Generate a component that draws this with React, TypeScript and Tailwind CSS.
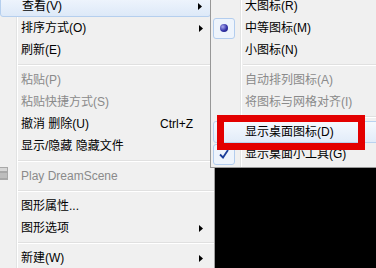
import React from "react";

type Item =
  | { sep: true }
  | { label: string; disabled?: boolean; arrow?: boolean; shortcut?: string; hover?: boolean; icon?: boolean };

const mainItems: Item[] = [
  { label: "查看(V)", arrow: true, hover: true },
  { label: "排序方式(O)", arrow: true },
  { label: "刷新(E)" },
  { sep: true },
  { label: "粘贴(P)", disabled: true },
  { label: "粘贴快捷方式(S)", disabled: true },
  { label: "撤消 删除(U)", shortcut: "Ctrl+Z" },
  { label: "显示/隐藏 隐藏文件" },
  { sep: true },
  { label: "Play DreamScene", disabled: true, icon: true },
  { sep: true },
  { label: "图形属性..." },
  { label: "图形选项", arrow: true },
  { sep: true },
  { label: "新建(W)", arrow: true },
];

type SubItem = { sep: true } | { label: string; disabled?: boolean; mark?: "radio" | "check"; hover?: boolean };

const subItems: SubItem[] = [
  { label: "大图标(R)" },
  { label: "中等图标(M)", mark: "radio" },
  { label: "小图标(N)" },
  { sep: true },
  { label: "自动排列图标(A)", disabled: true },
  { label: "将图标与网格对齐(I)", disabled: true },
  { sep: true },
  { label: "显示桌面图标(D)", hover: true },
  { label: "显示桌面小工具(G)", mark: "check" },
];

const font = { fontFamily: '"Liberation Sans", "Noto Sans CJK SC", sans-serif' };

function Arrow() {
  return (
    <svg width="4" height="7" viewBox="0 0 4 7" className="block">
      <path d="M0 0 L4 3.5 L0 7 Z" fill="#000" />
    </svg>
  );
}

function Separator({ left }: { left: number }) {
  return (
    <div className="h-[8px] flex flex-col justify-center" style={{ marginLeft: left }}>
      <div className="h-px bg-[#e0e0e0]" />
      <div className="h-px bg-white" />
    </div>
  );
}

function MainMenu() {
  return (
    <div className="relative w-[215px] h-[268px] shrink-0 overflow-hidden bg-[#f0f0f0] border-r border-[#a0a0a0]">
      {/* icon gutter line */}
      <div className="absolute left-[16px] top-0 bottom-0 w-[2px] border-l border-[#e2e3e3] bg-white" />
      <div className="relative -mt-[5px]">
        {mainItems.map((it, i) =>
          "sep" in it ? (
            <Separator key={i} left={18} />
          ) : (
            <div
              key={i}
              className={`relative h-[22px] mr-[3px] flex items-center pl-[21px] pr-[8px] ${
                it.hover ? "bg-gradient-to-b from-[#f1f6fd] to-[#dde9f8] border border-[#b5cfee] rounded-[3px] pl-[20px]" : ""
              } ${it.disabled ? "text-[#8a8a8a]" : "text-black"}`}
            >
              {it.icon && (
                <svg width="8" height="13" viewBox="0 0 8 13" className="absolute left-0 top-[2px]">
                  <rect x="0" y="0" width="8" height="13" fill="#a8a8a8" />
                  <rect x="0" y="1" width="7" height="3" fill="#d6d6d6" />
                  <rect x="0" y="6" width="7" height="5" fill="#bdbdbd" />
                </svg>
              )}
              <span className="flex-1 text-[12px] leading-none whitespace-nowrap">{it.label}</span>
              {it.shortcut && <span className="text-[12px] leading-none">{it.shortcut}</span>}
              <span className="w-[10px] flex justify-end">{it.arrow && <Arrow />}</span>
            </div>
          )
        )}
      </div>
    </div>
  );
}

function Mark({ kind }: { kind: "radio" | "check" }) {
  return (
    <div className="w-[22px] h-[21px] rounded-[3px] border border-[#b3cdee] bg-[#eef4fc] flex items-center justify-center">
      {kind === "radio" ? (
        <div className="w-[8px] h-[8px] rounded-full bg-[radial-gradient(circle_at_35%_35%,#a9a9f0,#3434a8_55%,#15156e)]" />
      ) : (
        <svg width="10" height="10" viewBox="0 0 10 10">
          <path d="M1 5.5 L4 8.5 L9 1" fill="none" stroke="#1b3d9a" strokeWidth="1.8" />
        </svg>
      )}
    </div>
  );
}

function SubMenu() {
  return (
    <div className="absolute left-[210px] top-[-6px] w-[172px] h-[174px] bg-[#f0f0f0] border border-[#979797] overflow-hidden">
      <div className="absolute left-[29px] top-0 bottom-0 w-[2px] border-l border-[#e2e3e3] bg-white" />
      <div className="relative">
        {subItems.map((it, i) =>
          "sep" in it ? (
            <Separator key={i} left={32} />
          ) : (
            <div
              key={i}
              className={`h-[22px] flex items-center ml-[2px] ${
                it.hover ? "bg-gradient-to-b from-[#f5f9fe] to-[#e2ecf9] border border-[#bad2ef] rounded-[3px]" : ""
              } ${it.disabled ? "text-[#8a8a8a]" : "text-black"}`}
            >
              <div className="w-[22px] h-[22px] flex items-center">{it.mark && <Mark kind={it.mark} />}</div>
              <span className={`${it.hover ? "ml-[9px]" : "ml-[10px]"} text-[12px] leading-none whitespace-nowrap`}>
                {it.label}
              </span>
            </div>
          )
        )}
      </div>
    </div>
  );
}

export default function App() {
  return (
    <div className="relative w-[376px] h-[268px] overflow-hidden bg-black flex" style={font}>
      <MainMenu />
      <SubMenu />
      {/* red annotation box */}
      <div className="absolute left-[217px] top-[115px] w-[148px] h-[35px] border-[7px] border-[#e30000]" />
    </div>
  );
}
